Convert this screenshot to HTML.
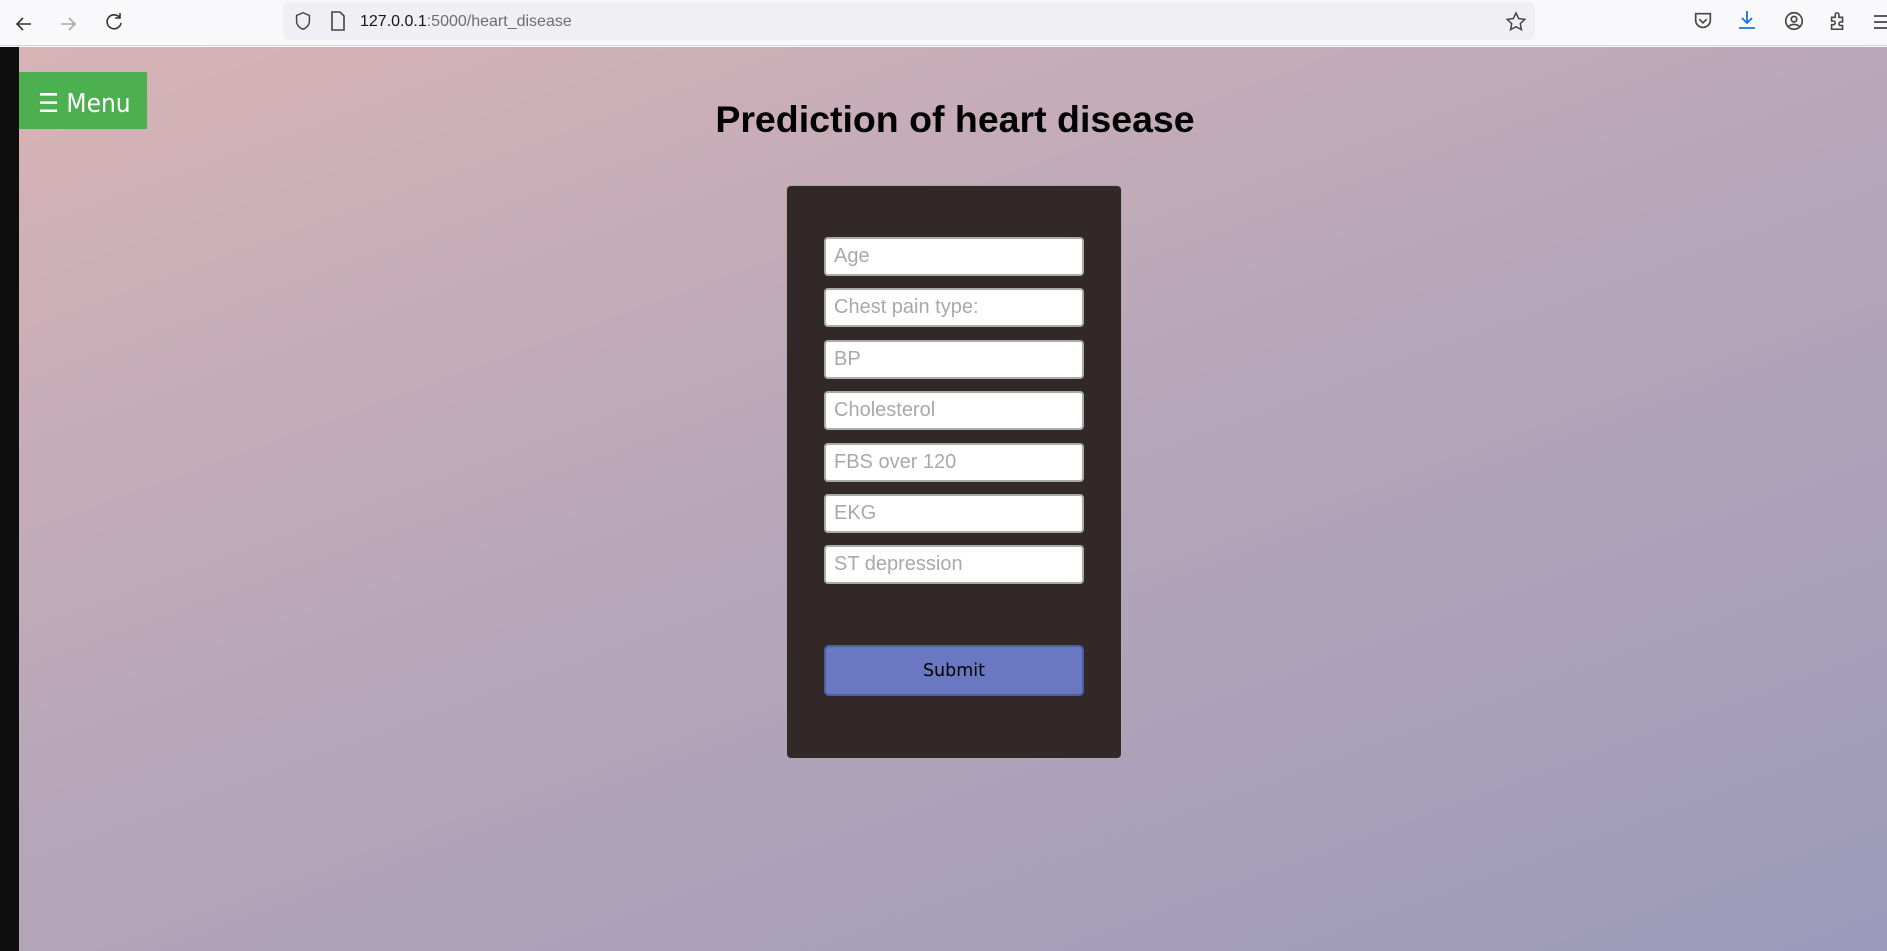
<!DOCTYPE html>
<html><head><meta charset="utf-8"><style>
*{margin:0;padding:0;box-sizing:border-box}
body{width:1887px;height:951px;overflow:hidden;font-family:"Liberation Sans",sans-serif;background:#f9f9fb;position:relative}
.bar{position:absolute;left:0;top:0;width:1887px;height:46px;background:#f9f9fb;border-bottom:1px solid #d6d6d9}
.url{position:absolute;left:283px;top:2px;width:1252px;height:38px;background:#f0f0f4;border-radius:6px}
.urltext{position:absolute;left:360px;top:13px;font-size:16px;color:#15141a}
.urltext span{color:#6c6c72}
.page{position:absolute;left:0;top:47px;width:1887px;height:904px;background:linear-gradient(160deg,#d8b4b6 0%,#b9a7b9 45%,#9b9aba 100%)}
.strip{position:absolute;left:0;top:47px;width:19px;height:904px;background:#0e0e0e}
.menu{position:absolute;left:19px;top:72px;width:128px;height:57px;background:#4caf50;color:#fff;font-size:26px;line-height:57px;padding-top:4px;padding-left:19px;white-space:nowrap;font-family:"DejaVu Sans Condensed","Liberation Sans",sans-serif}
h1{position:absolute;left:0;width:1910px;text-align:center;top:98px;font-size:37.5px;font-weight:bold;color:#000}
.card{position:absolute;left:786px;top:185px;width:336px;height:574px;background:#322828;border:1px solid #aaa;border-radius:5px}
.in{position:absolute;left:824px;width:260px;height:39px;background:#fff;border:2px solid #aaa;border-radius:4px;color:#a9a9a9;font-size:20px;line-height:35px;padding-left:8px}
.btn{position:absolute;left:824px;top:645px;width:260px;height:51px;background:#6a78c2;border:2px solid #4a5fa8;border-radius:5px;text-align:center;line-height:49px;font-size:17.5px;color:#000;font-family:"DejaVu Sans","Liberation Sans",sans-serif}
svg{position:absolute}
</style></head><body>
<div class="bar"></div>
<svg style="left:12px;top:12px" width="24" height="24" viewBox="0 0 24 24" fill="none" stroke="#333" stroke-width="1.6"><path d="M19 12H5M11 6l-6 6 6 6"/></svg>
<svg style="left:56px;top:12px" width="24" height="24" viewBox="0 0 24 24" fill="none" stroke="#aaa" stroke-width="1.6"><path d="M5 12h14M13 6l6 6-6 6"/></svg>
<svg style="left:102px;top:10px" width="24" height="24" viewBox="0 0 24 24" fill="none" stroke="#333" stroke-width="1.6"><path d="M18 8a7 7 0 1 0 1 5M18 3v5h-5"/></svg>
<div class="url"></div>
<svg style="left:292px;top:10px" width="22" height="22" viewBox="0 0 24 24" fill="none" stroke="#444" stroke-width="1.6"><path d="M12 3l7 3v6c0 5-4 8-7 9-3-1-7-4-7-9V6z"/></svg>
<svg style="left:328px;top:10px" width="20" height="22" viewBox="0 0 20 22" fill="none" stroke="#444" stroke-width="1.6"><path d="M4 2h8l4 4v14H4z"/></svg>
<div class="urltext">127.0.0.1<span>:5000/heart_disease</span></div>
<svg style="left:1504px;top:10px" width="24" height="24" viewBox="0 0 24 24" fill="none" stroke="#444" stroke-width="1.5"><path d="M12 3l2.7 5.6 6.1.8-4.5 4.2 1.1 6L12 16.7 6.6 19.6l1.1-6-4.5-4.2 6.1-.8z"/></svg>
<svg style="left:1692px;top:10px" width="22" height="22" viewBox="0 0 24 24" fill="none" stroke="#444" stroke-width="1.8"><path d="M4 4h16v7a8 8 0 0 1-16 0z"/><path d="M8 10l4 4 4-4"/></svg>
<svg style="left:1735px;top:8px" width="24" height="24" viewBox="0 0 24 24" fill="none" stroke="#1a73e8" stroke-width="1.8"><path d="M12 3v12M7 10l5 5 5-5M4 20h16"/></svg>
<svg style="left:1783px;top:10px" width="22" height="22" viewBox="0 0 24 24" fill="none" stroke="#444" stroke-width="1.8"><circle cx="12" cy="12" r="9"/><circle cx="12" cy="10" r="3"/><path d="M6 18c3-3 9-3 12 0"/></svg>
<svg style="left:1827px;top:9px" width="22" height="24" viewBox="0 0 24 24" fill="none" stroke="#444" stroke-width="1.7"><path d="M5 8h4V5a2 2 0 0 1 4 0v3h4v5h-2a2 2 0 0 0 0 4h2v4H5v-5h2a2 2 0 0 0 0-4H5z"/></svg>
<svg style="left:1874px;top:12px" width="13" height="20" viewBox="0 0 13 20" stroke="#444" stroke-width="1.8"><path d="M0 4h13M0 10h13M0 16h13"/></svg>
<div class="page"></div>
<div class="strip"></div>
<div class="menu">☰ Menu</div>
<h1>Prediction of heart disease</h1>
<div class="card"></div>
<div class="in" style="top:237px">Age</div>
<div class="in" style="top:288px">Chest pain type:</div>
<div class="in" style="top:340px">BP</div>
<div class="in" style="top:391px">Cholesterol</div>
<div class="in" style="top:443px">FBS over 120</div>
<div class="in" style="top:494px">EKG</div>
<div class="in" style="top:545px">ST depression</div>
<div class="btn">Submit</div>
</body></html>
